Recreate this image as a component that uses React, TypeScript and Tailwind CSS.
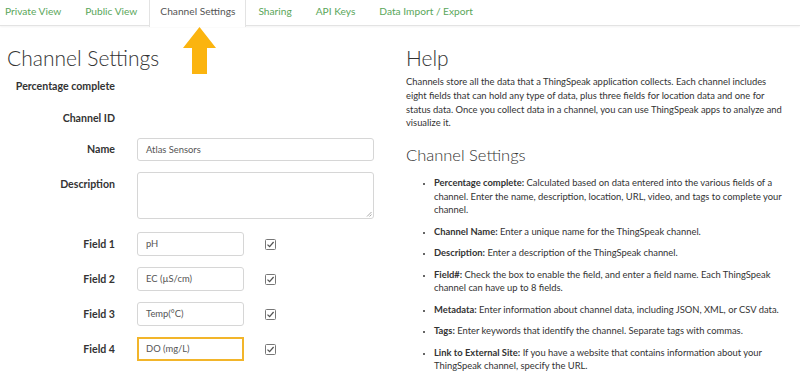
import React from 'react';

const tabs = ['Private View', 'Public View', 'Channel Settings', 'Sharing', 'API Keys', 'Data Import / Export'];

const fields = [
  { label: 'Field 1', value: 'pH' },
  { label: 'Field 2', value: 'EC (µS/cm)' },
  { label: 'Field 3', value: 'Temp(°C)' },
  { label: 'Field 4', value: 'DO (mg/L)', highlight: true },
];

const helpItems: { term: string; text: string }[] = [
  {
    term: 'Percentage complete:',
    text: 'Calculated based on data entered into the various fields of a channel. Enter the name, description, location, URL, video, and tags to complete your channel.',
  },
  { term: 'Channel Name:', text: 'Enter a unique name for the ThingSpeak channel.' },
  { term: 'Description:', text: 'Enter a description of the ThingSpeak channel.' },
  {
    term: 'Field#:',
    text: 'Check the box to enable the field, and enter a field name. Each ThingSpeak channel can have up to 8 fields.',
  },
  { term: 'Metadata:', text: 'Enter information about channel data, including JSON, XML, or CSV data.' },
  { term: 'Tags:', text: 'Enter keywords that identify the channel. Separate tags with commas.' },
  {
    term: 'Link to External Site:',
    text: 'If you have a website that contains information about your ThingSpeak channel, specify the URL.',
  },
];

const CheckBox = () => (
  <svg width="11" height="11" viewBox="0 0 11 11" className="block">
    <rect x="0.5" y="0.5" width="10" height="10" rx="1" fill="#fff" stroke="#777" />
    <path d="M2.5 5.6 L4.6 7.6 L8.6 3" fill="none" stroke="#555" strokeWidth="1.3" />
  </svg>
);

const Label = ({ children, className = '' }: { children: React.ReactNode; className?: string }) => (
  <div className={`w-[108px] shrink-0 text-right whitespace-nowrap font-bold text-[10.6px] text-[#333] ${className}`}>
    {children}
  </div>
);

export default function App() {
  return (
    <div className="w-[800px] h-[371px] overflow-hidden bg-white text-[#333] font-['Lato','Liberation_Sans',sans-serif]">
      {/* tab bar */}
      <div className="flex h-[26px] pl-[5px] border-b border-[#e3e3e3] shadow-[0_1px_2px_rgba(0,0,0,0.05)] text-[10.2px]">
        {tabs.map((t, i) => {
          const active = t === 'Channel Settings';
          return (
            <div
              key={t}
              className={
                active
                  ? 'px-[10px] h-[27px] leading-[23px] bg-white border-x border-[#e3e3e3] text-[#555]'
                  : `${i === 0 ? 'pr-[12px]' : 'px-[12px]'} leading-[23px] text-[#5aa65a]`
              }
            >
              {t}
            </div>
          );
        })}
      </div>

      <div className="flex">
        {/* left column */}
        <div className="w-[400px] shrink-0 pl-[7px] relative">
          {/* arrow pointing at active tab */}
          <svg className="absolute left-[183px] top-[1px]" width="33" height="47" viewBox="0 0 33 47">
            <path d="M16.5 0 L33 21 L24 21 L24 47 L9 47 L9 21 L0 21 Z" fill="#fbb40f" />
          </svg>

          <h1 className="mt-[18px] text-[21px] leading-[27px] font-light">Channel Settings</h1>

          <div className="mt-[6px] flex flex-col">
            <div className="flex h-[20px] items-center">
              <Label>Percentage complete</Label>
            </div>
            <div className="flex h-[20px] items-center mt-[12px]">
              <Label>Channel ID</Label>
            </div>
            <div className="flex items-start mt-[9px]">
              <Label className="leading-[23px]">Name</Label>
              <div className="ml-[22px] w-[237px] h-[23px] border border-[#d6d6d6] rounded-[3px] px-[8px] text-[9.4px] leading-[21px] text-[#555]">
                Atlas Sensors
              </div>
            </div>
            <div className="flex items-start mt-[11px]">
              <Label className="leading-[24px]">Description</Label>
              <div className="ml-[22px] w-[237px] h-[47px] border border-[#d6d6d6] rounded-[3px] relative">
                <svg className="absolute right-[1px] bottom-[1px]" width="6" height="6" viewBox="0 0 6 6">
                  <path d="M5.5 1 L1 5.5 M5.5 3.5 L3.5 5.5" stroke="#aaa" strokeWidth="1" />
                </svg>
              </div>
            </div>
            {fields.map((f, i) => (
              <div key={f.label} className={`flex items-center ${i === 0 ? 'mt-[13px]' : 'mt-[11px]'}`}>
                <Label className="leading-[24px]">{f.label}</Label>
                <div
                  className={
                    f.highlight
                      ? 'ml-[22px] w-[107px] h-[24px] border-2 border-[#f2b52a] px-[7px] text-[9.4px] leading-[20px] text-[#555]'
                      : 'ml-[22px] w-[107px] h-[24px] border border-[#d6d6d6] rounded-[3px] px-[8px] text-[9.4px] leading-[22px] text-[#555]'
                  }
                >
                  {f.value}
                </div>
                <div className="ml-[21px]">
                  <CheckBox />
                </div>
              </div>
            ))}
          </div>
        </div>

        {/* right column: help */}
        <div className="w-[388px] pl-[6px]">
          <h2 className="mt-[18px] text-[21px] leading-[27px] font-light">Help</h2>
          <p className="mt-[4px] text-[9.4px] leading-[13.8px]">
            Channels store all the data that a ThingSpeak application collects. Each channel includes eight fields that can
            hold any type of data, plus three fields for location data and one for status data. Once you collect data in a
            channel, you can use ThingSpeak apps to analyze and visualize it.
          </p>
          <h3 className="mt-[14px] text-[16.5px] leading-[22px] font-light">Channel Settings</h3>
          <ul className="mt-[10px] pl-[28px] list-disc text-[9.4px] leading-[13.5px] flex flex-col gap-[8px] marker:text-[7px]">
            {helpItems.map((it) => (
              <li key={it.term}>
                <span className="font-bold">{it.term}</span> {it.text}
              </li>
            ))}
          </ul>
        </div>
      </div>
    </div>
  );
}
